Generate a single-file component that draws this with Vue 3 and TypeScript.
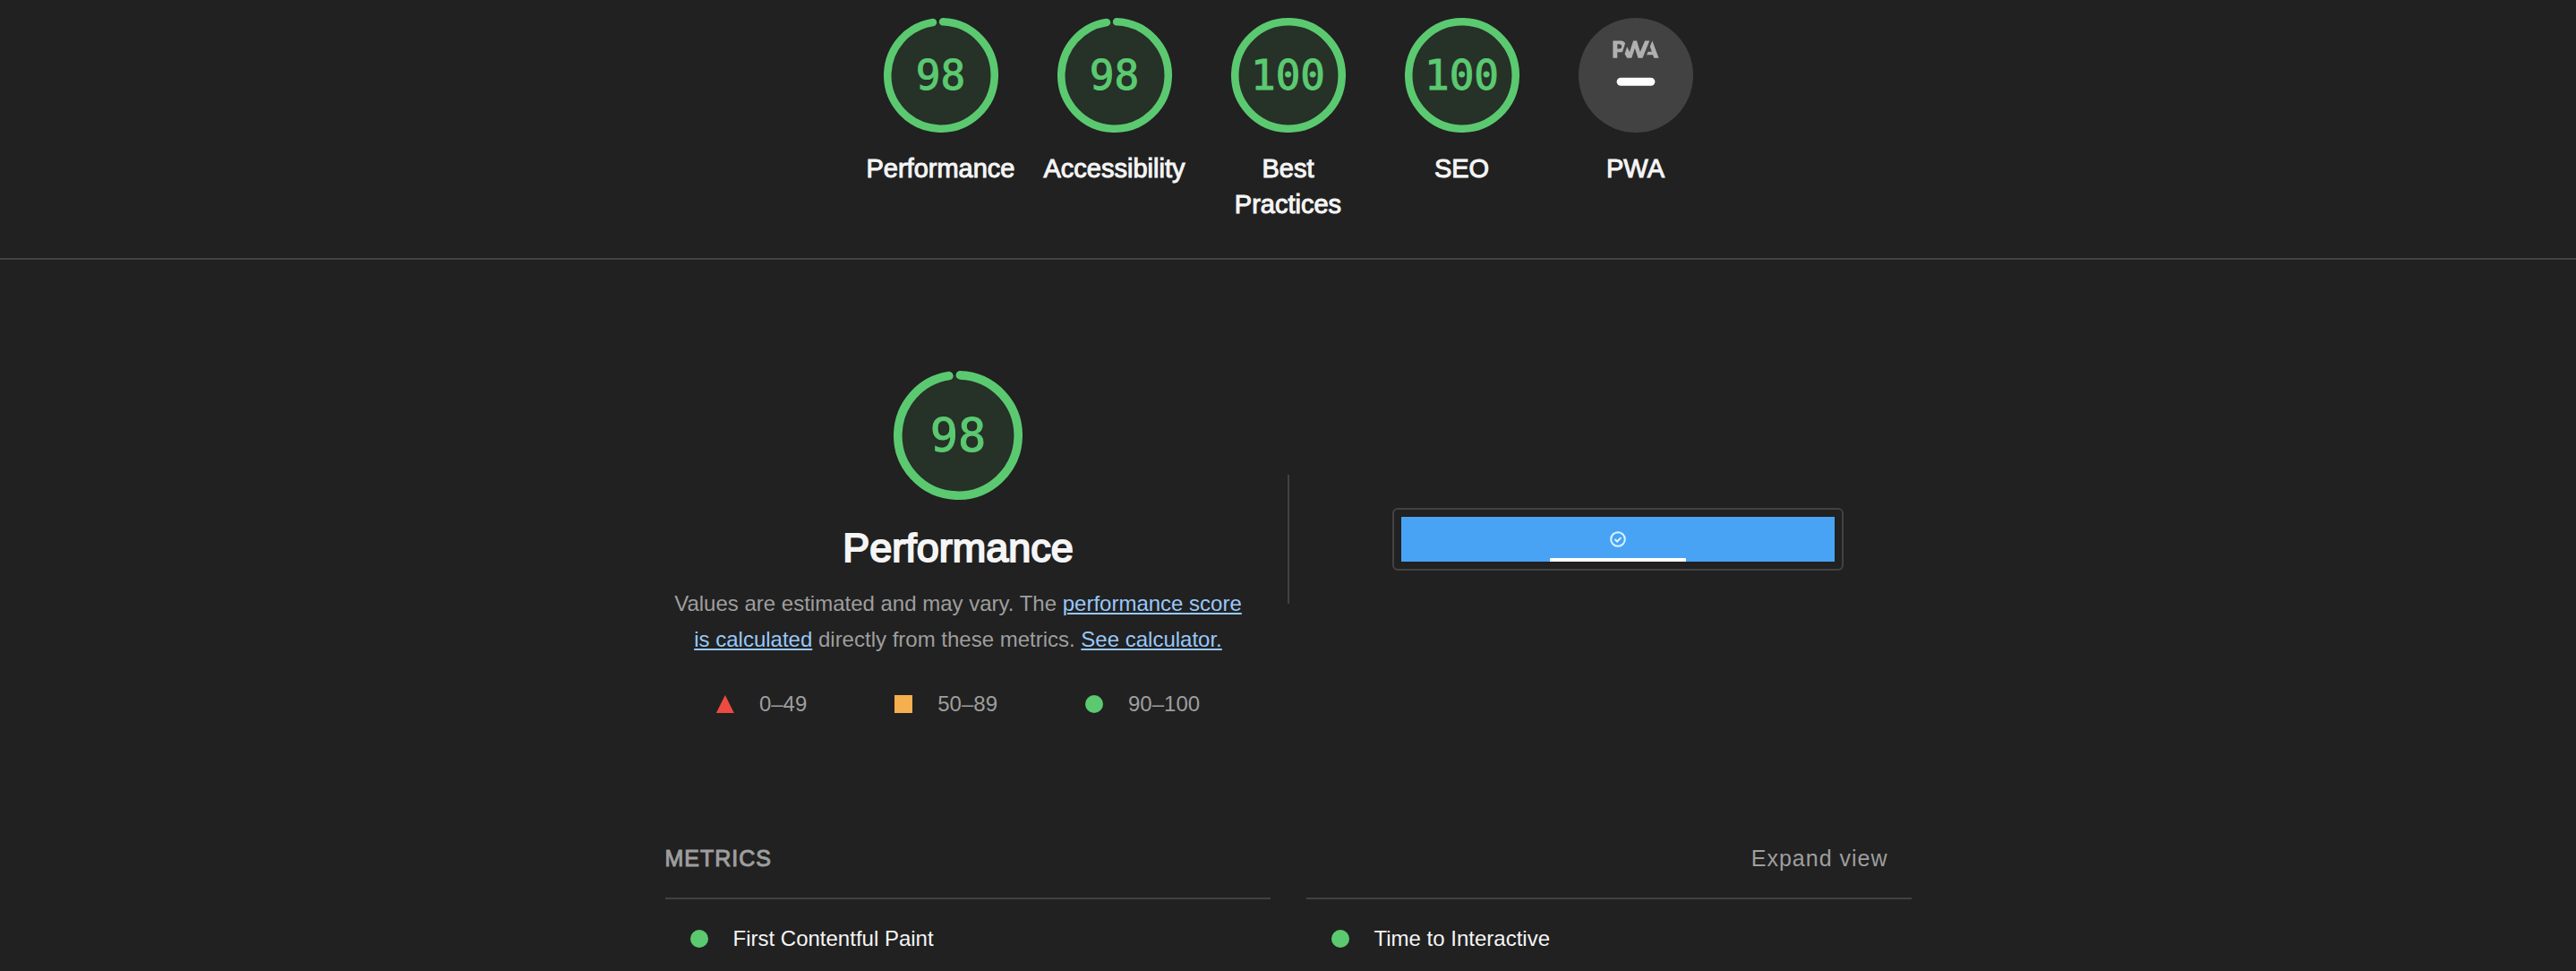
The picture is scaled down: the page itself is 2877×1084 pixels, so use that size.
<script setup lang="ts">
interface Category {
  label: string
  score: number
}

const categories: Category[] = [
  { label: 'Performance', score: 98 },
  { label: 'Accessibility', score: 98 },
  { label: 'Best Practices', score: 100 },
  { label: 'SEO', score: 100 },
]

const metrics: string[] = ['First Contentful Paint', 'Time to Interactive']

const circumference = 2 * Math.PI * 56

function arc(score: number): string {
  const length = score === 100 ? circumference : (circumference * score) / 100 - 4
  return `${length} ${circumference}`
}
</script>

<template>
  <div class="report">
    <header class="scores">
      <a v-for="c in categories" :key="c.label" href="#performance" class="score">
        <span class="gauge">
          <svg viewBox="0 0 120 120" aria-hidden="true">
            <circle class="disc" cx="60" cy="60" r="56" />
            <circle class="arc" cx="60" cy="60" r="56" transform="rotate(-88 60 60)" :stroke-dasharray="arc(c.score)" />
          </svg>
          <span class="value">{{ c.score }}</span>
        </span>
        <span class="label">{{ c.label }}</span>
      </a>
      <a href="#pwa" class="score">
        <span class="gauge">
          <svg viewBox="0 0 60 60" aria-hidden="true">
            <circle cx="30" cy="30" r="30" fill="#424242" />
            <g fill="#b0b0b0">
              <path d="M35.66 19.39l.7-1.75h2L37.4 15 38.6 12l3.4 9h-2.51l-.58-1.61z" />
              <path d="M33.52 21l3.65-9h-2.42l-2.5 5.82L30.5 12h-1.86l-1.9 5.82-1.35-2.65-1.21 3.72L25.4 21h2.38l1.72-5.2 1.64 5.2z" />
              <path d="M20.3 17.91h1.48c.45 0 .85-.05 1.2-.15l.39-1.18 1.07-3.3a2.64 2.64 0 0 0-.28-.37c-.55-.6-1.36-.91-2.42-.91H18v9h2.3V17.9zm1.96-3.84c.22.22.33.5.33.87 0 .36-.1.65-.29.87-.2.23-.59.35-1.15.35h-.86v-2.41h.87c.52 0 .89.1 1.1.32z" />
            </g>
            <rect x="20" y="31.3" width="20" height="4.2" rx="2.1" fill="#fff" />
          </svg>
        </span>
        <span class="label">PWA</span>
      </a>
    </header>

    <main class="category" id="performance">
      <section class="overview">
        <div class="summary">
          <span class="gauge large">
            <svg viewBox="0 0 120 120" aria-hidden="true">
              <circle class="disc" cx="60" cy="60" r="56" />
              <circle class="arc" cx="60" cy="60" r="56" transform="rotate(-88 60 60)" :stroke-dasharray="arc(98)" />
            </svg>
            <span class="value">98</span>
          </span>
          <h1 class="title">Performance</h1>
          <p class="description">
            Values are estimated and may vary. The <a href="#score">performance score is calculated</a> directly from these metrics. <a href="#calculator">See calculator.</a>
          </p>
          <ul class="scale">
            <li><i class="mark fail"></i>0–49</li>
            <li><i class="mark average"></i>50–89</li>
            <li><i class="mark pass"></i>90–100</li>
          </ul>
        </div>
        <div class="divider"></div>
        <div class="preview">
          <div class="frame">
            <div class="shot">
              <svg class="check" viewBox="0 0 18 18" aria-hidden="true">
                <circle cx="9" cy="9" r="7.8" />
                <path d="M5.5 9l2.6 2.5 4.4-4.4" />
              </svg>
              <span class="panel"></span>
            </div>
          </div>
        </div>
      </section>

      <section>
        <div class="metrics-header">
          <h2>METRICS</h2>
          <button type="button">Expand view</button>
        </div>
        <div class="metrics">
          <div v-for="m in metrics" :key="m" class="metric">
            <i class="mark pass"></i>{{ m }}
          </div>
        </div>
      </section>
    </main>
  </div>
</template>

<style>
body {
  margin: 0;
  background: #212121;
}
</style>

<style scoped>
.report {
  color: #f5f5f5;
  font: 24px/40px "Liberation Sans", Arial, sans-serif;
}
.scores {
  display: flex;
  justify-content: center;
  padding: 20px 0 30px;
  border-bottom: 2px solid #424242;
}
.score {
  box-sizing: border-box;
  width: 194px;
  padding: 0 12px 10px;
  display: flex;
  flex-direction: column;
  align-items: center;
  gap: 20px;
  color: inherit;
  text-decoration: none;
}
.label {
  font-size: 29px;
  text-align: center;
  -webkit-text-stroke: 1px currentColor;
}
.gauge {
  display: grid;
  place-items: center;
  width: 128px;
  height: 128px;
  color: #5bc970;
  font: 46px/1 "DejaVu Sans Mono", monospace;
}
.gauge.large {
  width: 144px;
  height: 144px;
  font-size: 52px;
}
.gauge > * {
  grid-area: 1 / 1;
}
.gauge svg {
  display: block;
  width: 100%;
  height: 100%;
}
.value {
  -webkit-text-stroke: 1px currentColor;
}
.disc {
  fill: #5bc970;
  fill-opacity: 0.1;
}
.arc {
  fill: none;
  stroke: #5bc970;
  stroke-width: 8;
  stroke-linecap: round;
}
.category {
  max-width: 1392px;
  margin: 0 auto;
  padding: 124px 20px 0;
}
.overview {
  display: flex;
  justify-content: space-between;
  gap: 40px;
}
.summary {
  flex: 1;
  display: flex;
  flex-direction: column;
  align-items: center;
}
.title {
  margin: 24px 0 12px;
  font-size: 45px;
  font-weight: 400;
  line-height: 60px;
  -webkit-text-stroke: 2px currentColor;
}
.description {
  margin: 0;
  padding: 0 8px;
  color: #9e9e9e;
  text-align: center;
}
.description a {
  color: #99c8fa;
  text-decoration-thickness: 2px;
  text-underline-offset: 2px;
}
.scale {
  display: flex;
  gap: 98px;
  margin: 32px 0 -16px;
  padding: 0;
  list-style: none;
  color: #9e9e9e;
}
.scale li,
.metric {
  display: flex;
  align-items: center;
  gap: 28px;
}
.mark {
  width: 20px;
  height: 20px;
}
.fail {
  background: #eb4b41;
  clip-path: polygon(50% 0, 100% 100%, 0 100%);
}
.average {
  background: #f5af4f;
}
.pass {
  border-radius: 50%;
  background: #5bc970;
}
.divider {
  align-self: center;
  width: 2px;
  height: 144px;
  background: #424242;
}
.preview {
  flex: 1;
  display: flex;
  align-items: center;
  justify-content: center;
}
.frame {
  padding: 8px;
  border: 2px solid #424242;
  border-radius: 6px;
}
.shot {
  display: flex;
  flex-direction: column;
  align-items: center;
  justify-content: space-between;
  width: 484px;
  height: 50px;
  background: #49a3f4;
}
.check {
  width: 18px;
  height: 18px;
  margin-top: 16px;
  fill: none;
  stroke: #d8f5ff;
  stroke-width: 2;
}
.panel {
  width: 152px;
  height: 4px;
  border-radius: 1px 1px 0 0;
  background: #fff;
}
.metrics-header {
  display: flex;
  justify-content: space-between;
  align-items: center;
  margin-top: 148px;
  color: #9e9e9e;
}
h2,
button {
  margin: 0;
  font: 25px/40px "Liberation Sans", Arial, sans-serif;
  letter-spacing: 1px;
}
h2 {
  -webkit-text-stroke: 1px currentColor;
}
button {
  padding: 0 26px;
  border: 0;
  background: none;
  color: inherit;
  cursor: pointer;
}
.metrics {
  display: grid;
  grid-template-columns: 1fr 1fr;
  column-gap: 40px;
  margin-top: 24px;
}
.metric {
  padding: 24px 28px;
  border-top: 2px solid #424242;
}
</style>
